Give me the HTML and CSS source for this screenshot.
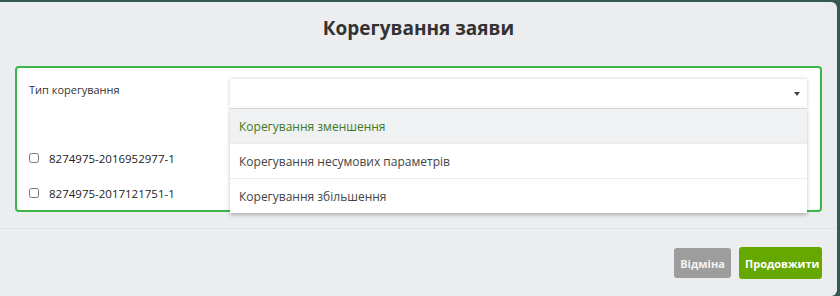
FILE: index.html
```html
<!DOCTYPE html>
<html lang="uk">
<head>
    <meta charset="UTF-8" />
    <title>Корегування заяви</title>
    <link rel="stylesheet" href="styles.css">
</head>
<body>
    <div class="modal">
        <div class="modal-header">
            <h2 class="modal-title">Корегування заяви</h2>
        </div>

        <div class="modal-body">
            <div class="panel">
                <div class="field-row">
                    <label class="field-label">Тип корегування</label>
                    <div class="select-wrap">
                        <div class="select-box">
                            <span class="caret"></span>
                        </div>
                        <ul class="select-menu">
                            <li class="active">Корегування зменшення</li>
                            <li>Корегування несумових параметрів</li>
                            <li>Корегування збільшення</li>
                        </ul>
                    </div>
                </div>

                <div class="check-list">
                    <label class="check-row">
                        <input type="checkbox" class="check-box" />
                        <span>8274975-2016952977-1</span>
                    </label>
                    <label class="check-row">
                        <input type="checkbox" class="check-box" />
                        <span>8274975-2017121751-1</span>
                    </label>
                </div>
            </div>
        </div>

        <div class="modal-footer">
            <button class="btn btn-cancel">Відміна</button>
            <button class="btn btn-primary">Продовжити</button>
        </div>
    </div>
</body>
</html>
```

FILE: styles.css
```css
body {
    margin: 0;
    padding: 0;
    background-color: #365a4f;
    font-family: "Open Sans", "Noto Sans", sans-serif;
    color: #333;
}

.modal {
    width: 837px;
    height: 294px;
    margin-top: 2px;
    background-color: #ecedef;
    border-radius: 0 6px 6px 0;
    box-sizing: border-box;
}

.modal-header {
    height: 55px;
    display: flex;
    align-items: center;
    justify-content: center;
    padding: 0 0 4px 0;
    box-sizing: border-box;
}

.modal-title {
    margin: 0;
    font-size: 19px;
    font-weight: bold;
    color: #333;
}

.modal-body {
    padding: 9px 15px 16px 15px;
    border-bottom: 1px solid #e2e3e5;
}

.panel {
    background-color: #fff;
    border: 2px solid #3cb54a;
    border-radius: 4px;
    height: 146px;
    box-sizing: border-box;
    padding: 11px 13px 0 12px;
}

.field-row {
    display: flex;
    align-items: flex-start;
}

.field-label {
    flex: 0 0 201px;
    font-size: 11px;
    color: #333;
    padding-top: 3px;
}

.select-wrap {
    flex: 1;
    position: relative;
}

.select-box {
    height: 29px;
    background-color: #fff;
    box-shadow: 0 0 4px rgba(0, 0, 0, 0.2);
    position: relative;
}

.caret {
    position: absolute;
    right: 7px;
    top: 13px;
    width: 0;
    height: 0;
    border-left: 3px solid transparent;
    border-right: 3px solid transparent;
    border-top: 4px solid #444;
}

.select-menu {
    position: absolute;
    left: 0;
    right: 0;
    top: 29px;
    margin: 0;
    padding: 0;
    list-style: none;
    background-color: #fff;
    border-top: 1px solid #d6d6d6;
    box-shadow: 0 2px 4px rgba(0, 0, 0, 0.25);
    z-index: 2;
}

.select-menu li {
    height: 34px;
    line-height: 36px;
    padding-left: 9px;
    font-size: 12px;
    color: #444;
    border-bottom: 1px solid #ececec;
}

.select-menu li:last-child {
    border-bottom: none;
}

.select-menu li.active {
    background-color: #f0f1f2;
    color: #3d7a1f;
}

.check-list {
    margin-top: 41px;
    display: flex;
    flex-direction: column;
    gap: 17px;
}

.check-row {
    display: flex;
    align-items: center;
    font-size: 11.5px;
    color: #222;
    height: 18px;
}

.check-box {
    width: 10px;
    height: 10px;
    margin: 0 10px 0 0;
}

.modal-footer {
    display: flex;
    justify-content: flex-end;
    align-items: center;
    gap: 8px;
    padding: 18px 15px 0 0;
}

.btn {
    border: none;
    border-radius: 3px;
    font-family: "Open Sans", "Noto Sans", sans-serif;
    font-size: 11px;
    font-weight: bold;
    color: #fff;
    cursor: pointer;
}

.btn-cancel {
    width: 57px;
    height: 30px;
    background-color: #9d9d9d;
    color: #f2f2f2;
}

.btn-primary {
    width: 83px;
    height: 32px;
    background-color: #66a800;
}
```
